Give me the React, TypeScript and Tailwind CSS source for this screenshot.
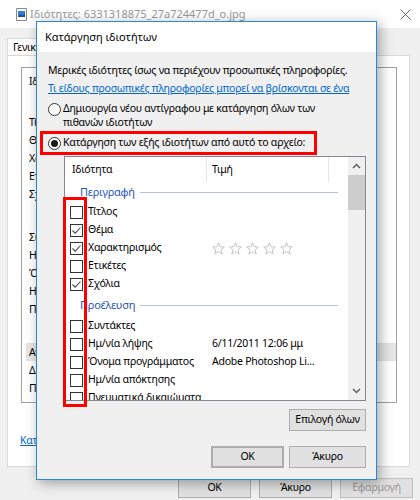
import { ReactNode } from "react"

const detailsRows: { label: string; gap?: number; active?: boolean }[] = [
  { label: "Ιδιότητα" },
  { label: "Τίτλος", gap: 23 },
  { label: "Θέμα" },
  { label: "Χαρακτηρισμός" },
  { label: "Ετικέτες" },
  { label: "Σχόλια" },
  { label: "Συντάκτες", gap: 25 },
  { label: "Ημ/νία λήψης" },
  { label: "Όνομα προγράμματος" },
  { label: "Ημ/νία απόκτησης" },
  { label: "Πνευματικά δικαιώματα" },
  { label: "Αναγνωριστικό εικόνας", gap: 25, active: true },
  { label: "Διαστάσεις" },
  { label: "Πλάτος" },
]

const description = [
  { label: "Τίτλος", checked: false },
  { label: "Θέμα", checked: true },
  { label: "Χαρακτηρισμός", checked: true, stars: true },
  { label: "Ετικέτες", checked: false },
  { label: "Σχόλια", checked: true },
]

const origin = [
  { label: "Συντάκτες", value: "" },
  { label: "Ημ/νία λήψης", value: "6/11/2011 12:06 μμ" },
  { label: "Όνομα προγράμματος", value: "Adobe Photoshop Li..." },
  { label: "Ημ/νία απόκτησης", value: "" },
  { label: "Πνευματικά δικαιώματα", value: "" },
]

function Checkbox({ checked }: { checked: boolean }) {
  return (
    <div className="w-[13px] h-[13px] shrink-0 border border-[#333333] bg-white flex items-center justify-center">
      {checked && (
        <svg width="11" height="11" viewBox="0 0 11 11">
          <path d="M1.5 5.5 L4.2 8.2 L9.5 2.5" fill="none" stroke="#4a4a4a" strokeWidth="1.1" />
        </svg>
      )}
    </div>
  )
}

function Radio({ checked }: { checked: boolean }) {
  return (
    <div className="w-[13px] h-[13px] shrink-0 rounded-full border border-[#333333] bg-white flex items-center justify-center">
      {checked && <div className="w-[7px] h-[7px] rounded-full bg-[#1a1a1a]" />}
    </div>
  )
}

function Star() {
  return (
    <svg width="13" height="13" viewBox="0 0 13 13">
      <path
        d="M6.5 0.8 L8.1 4.7 L12.3 5 L9.1 7.7 L10.1 11.9 L6.5 9.6 L2.9 11.9 L3.9 7.7 L0.7 5 L4.9 4.7 Z"
        fill="none"
        stroke="#c4c4c4"
        strokeWidth="1"
      />
    </svg>
  )
}

function Button({ children, className = "" }: { children: ReactNode; className?: string }) {
  return (
    <div className={`flex items-center justify-center whitespace-nowrap bg-[#e1e1e1] border border-[#adadad] ${className}`}>
      {children}
    </div>
  )
}

function GroupRow({ label, className = "" }: { label: string; className?: string }) {
  return (
    <div className={`flex items-center pl-[15px] pr-[10px] ${className}`}>
      <span className="text-[#1f55b8] text-[11px]">{label}</span>
      <div className="flex-1 h-px bg-[#b8c2d8] ml-[5px]" />
    </div>
  )
}

export default function App() {
  return (
    <div className="relative w-[420px] h-[500px] overflow-hidden bg-[#f0f0f0] text-[10.5px] tracking-[-0.25px] text-black font-['Noto_Sans',sans-serif]">

      {/* background properties window */}

      <div className="h-[28px] bg-white flex items-center pl-[16px] pr-[9px]">
        <svg width="11" height="13" viewBox="0 0 11 13">
          <path d="M0.5 0.5 H10.5 V12.5 H0.5 Z" fill="#ffffff" stroke="#8a8a8a" />
          <rect x="2" y="3" width="7" height="6" fill="#2d7fd3" />
          <path d="M2 9 L4.5 6 L6.5 8 L9 5 V9 Z" fill="#174f9a" />
        </svg>
        <span className="ml-[3px] text-[11px] tracking-normal text-[#999999]">Ιδιότητες: 6331318875_27a724477d_o.jpg</span>
        <svg className="ml-auto" width="11" height="11" viewBox="0 0 11 11">
          <path d="M0.5 0.5 L10.5 10.5 M10.5 0.5 L0.5 10.5" stroke="#666666" strokeWidth="1" />
        </svg>
      </div>

      <div className="px-[7px] pt-[10px]">
        <div className="flex">
          <div className="h-[17px] px-[5px] bg-white border border-b-0 border-[#d9d9d9] leading-[17px]">Γενικά</div>
        </div>
        <div className="w-[403px] h-[412px] bg-white border border-[#d9d9d9] px-[12px] pt-[11px]">
          <div className="ml-[1px] w-[376px] h-[336px] border border-[#a0a0a0] pl-[4px] pt-[4px]">
            {detailsRows.map((r) => (
              <div
                key={r.label}
                style={{ marginTop: r.gap ?? 0 }}
                className={`h-[18px] leading-[18px] pl-[3px] whitespace-nowrap ${r.active ? "bg-[#e5e5e5]" : ""}`}
              >
                {r.label}
              </div>
            ))}
          </div>
          <div className="mt-[28px] text-[#0066cc] underline leading-[18px]">
            Κατάργηση ιδιοτήτων και προσωπικών πληροφοριών
          </div>
        </div>
        <div className="flex justify-end gap-[8px] mt-[11px]">
          <Button className="w-[73px] h-[20px]">OK</Button>
          <Button className="w-[73px] h-[20px]">Άκυρο</Button>
          <Button className="w-[73px] h-[20px] bg-[#cccccc] border-[#bfbfbf] text-[#9a9a9a]">Εφαρμογή</Button>
        </div>
      </div>

      {/* remove properties dialog */}

      <div className="absolute left-[36px] top-[21px] w-[341px] h-[459px] border border-[#2b88d8] bg-[#f0f0f0] shadow-[3px_3px_12px_rgba(0,0,0,0.35)] flex flex-col">

        <div className="h-[30px] bg-white flex items-center pl-[8px] text-[11px] tracking-normal">Κατάργηση ιδιοτήτων</div>

        <div className="flex flex-col pl-[11px] pr-[10px] pt-[9px]">

          <p className="leading-[18px] whitespace-nowrap">Μερικές ιδιότητες ίσως να περιέχουν προσωπικές πληροφορίες.</p>
          <p className="leading-[18px] whitespace-nowrap text-[#0066cc] underline">Τι είδους προσωπικές πληροφορίες μπορεί να βρίσκονται σε ένα</p>

          <div className="flex mt-[4px]">
            <div className="mt-[2px]"><Radio checked={false} /></div>
            <div className="ml-[2px] leading-[14px]">
              <div>Δημιουργία νέου αντίγραφου με κατάργηση όλων των</div>
              <div>πιθανών ιδιοτήτων</div>
            </div>
          </div>

          <div className="-ml-[8px] mt-[2px] w-[277px] h-[24px] border-[3px] border-[#ff0000] flex items-center pl-[5px]">
            <Radio checked />
            <span className="ml-[2px] whitespace-nowrap">Κατάργηση των εξής ιδιοτήτων από αυτό το αρχείο:</span>
          </div>

          {/* LIST */}

          <div className="relative ml-[16px] mt-[1px] w-[302px] h-[245px] border border-[#828790] bg-white">
            <div className="flex h-full overflow-hidden">
              <div className="flex-1 flex flex-col">
                <div className="h-[25px] shrink-0 flex items-center">
                  <div className="w-[141px] pl-[7px]">Ιδιότητα</div>
                  <div className="w-px h-full bg-[#e5e5e5]" />
                  <div className="w-[121px] pl-[5px]">Τιμή</div>
                  <div className="w-px h-full bg-[#e5e5e5]" />
                </div>

                <GroupRow label="Περιγραφή" className="h-[21px] shrink-0" />
                {description.map((r) => (
                  <div key={r.label} className="h-[18px] shrink-0 flex items-center">
                    <div className="w-[147px] flex items-center pl-[5px]">
                      <Checkbox checked={r.checked} />
                      <span className="ml-[5px] whitespace-nowrap">{r.label}</span>
                    </div>
                    {r.stars && (
                      <div className="flex gap-[4px]">
                        <Star /><Star /><Star /><Star /><Star />
                      </div>
                    )}
                  </div>
                ))}

                <GroupRow label="Προέλευση" className="h-[24px] shrink-0" />
                {origin.map((r) => (
                  <div key={r.label} className="h-[18px] shrink-0 flex items-center">
                    <div className="w-[147px] flex items-center pl-[5px]">
                      <Checkbox checked={false} />
                      <span className="ml-[5px] whitespace-nowrap">{r.label}</span>
                    </div>
                    <span className="whitespace-nowrap">{r.value}</span>
                  </div>
                ))}
              </div>

              {/* scrollbar */}
              <div className="w-[17px] shrink-0 bg-[#f0f0f0] flex flex-col">
                <div className="h-[18px] flex items-center justify-center">
                  <svg width="9" height="6" viewBox="0 0 9 6">
                    <path d="M1 5 L4.5 1.5 L8 5" fill="none" stroke="#606060" strokeWidth="1.5" />
                  </svg>
                </div>
                <div className="h-[35px] bg-[#cdcdcd]" />
                <div className="flex-1" />
                <div className="h-[18px] flex items-center justify-center">
                  <svg width="9" height="6" viewBox="0 0 9 6">
                    <path d="M1 1 L4.5 4.5 L8 1" fill="none" stroke="#606060" strokeWidth="1.5" />
                  </svg>
                </div>
              </div>
            </div>

            {/* checkbox highlight */}
            <div className="absolute left-[-2px] top-[40px] w-[24px] h-[210px] border-[3px] border-[#ff0000]" />
          </div>

          <Button className="self-end mt-[8px] w-[77px] h-[22px]">Επιλογή όλων</Button>

          <div className="flex justify-end gap-[5px] mt-[15px]">
            <Button className="w-[73px] h-[22px] border-2 border-[#0078d7]">OK</Button>
            <Button className="w-[77px] h-[22px]">Άκυρο</Button>
          </div>
        </div>
      </div>
    </div>
  )
}
